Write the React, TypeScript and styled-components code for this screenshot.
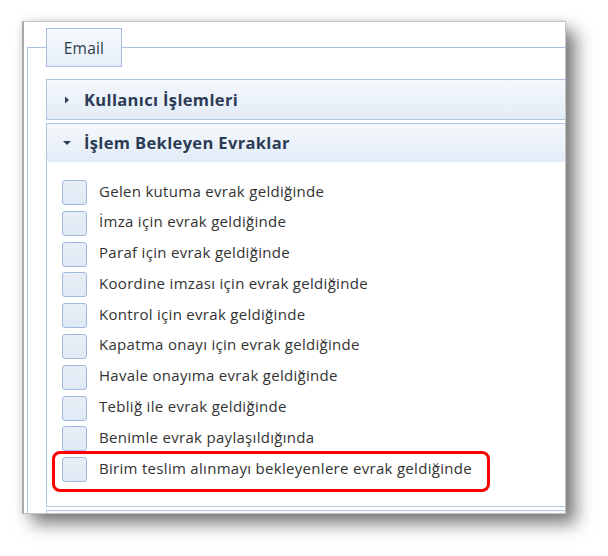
import React from 'react'
import styled, { createGlobalStyle } from 'styled-components'

const GlobalStyle = createGlobalStyle`
  html, body {
    margin: 0;
    padding: 0;
    background: #fff;
  }
  body {
    width: 608px;
    height: 556px;
    overflow: hidden;
    font-family: 'Open Sans', 'Liberation Sans', sans-serif;
  }
`

const Page = styled.div`
  padding: 21px 0 0 22px;
`

const Frame = styled.div`
  width: 541px;
  height: 491px;
  border: 1px solid #c4c4c4;
  border-left: 2px solid #a9a9a9;
  background: #fff;
  overflow: hidden;
  box-shadow: 10px 10px 16px rgba(0, 0, 0, 0.5), 0 0 8px rgba(0, 0, 0, 0.12);
`

const Fieldset = styled.fieldset`
  margin: 6px 0 0 3px;
  padding: 12px 0 0 18px;
  width: 600px;
  border: 1px solid #a9c0e4;
  border-right: none;
  border-bottom: none;
  min-inline-size: auto;
`

const Legend = styled.legend`
  box-sizing: border-box;
  height: 39px;
  width: 76px;
  padding: 0;
  border: 1px solid #a9c0e4;
  background: linear-gradient(#f6f9fd, #e6eef8);
  display: flex;
  align-items: center;
  justify-content: center;
  font-size: 15.5px;
  letter-spacing: 0.2px;
  color: #2f3b4c;
`

const Panel = styled.section`
  margin-bottom: 3px;
`

const Header = styled.div<{ open?: boolean }>`
  box-sizing: border-box;
  height: ${({ open }) => (open ? '39px' : '41px')};
  display: flex;
  align-items: center;
  gap: 12px;
  padding-left: 15px;
  border: 1px solid #b1c5e3;
  border-bottom-color: ${({ open }) => (open ? '#e3ecf7' : '#b1c5e3')};
  background: linear-gradient(#f5f8fc, #e2ecf7);
  font-weight: 700;
  font-size: 16.5px;
  letter-spacing: 0.35px;
  color: #2c3b55;
`

const Arrow = styled.svg`
  flex: none;
  width: 10px;
  height: 10px;
`

const Content = styled.div`
  box-sizing: border-box;
  height: 345px;
  padding: 18px 0 0 15px;
  border: 1px solid #b1c5e3;
  border-top: none;
  border-right: none;
  display: flex;
  flex-direction: column;
  gap: 5.8px;
`

const Row = styled.label<{ highlight?: boolean }>`
  display: flex;
  align-items: center;
  gap: 12px;
  font-size: 15px;
  letter-spacing: 0.3px;
  color: #333;
  ${({ highlight }) =>
    highlight &&
    `
    box-sizing: border-box;
    width: 438px;
    margin: -6px 0 0 -10px;
    padding: 3px 0 7px 7px;
    border: 3px solid #ff0000;
    border-radius: 8px;
  `}
`

const Text = styled.span`
  margin-bottom: 4px;
`

const Check = styled.span`
  flex: none;
  box-sizing: border-box;
  width: 25px;
  height: 25px;
  border: 1px solid #9fb9de;
  border-radius: 3px;
  background: linear-gradient(#e8eef7, #e0e9f4);
`

const ArrowRight = () => (
  <Arrow viewBox="0 0 10 10">
    <path d="M3 1.5 L7 5 L3 8.5 Z" fill="#2c3b55" />
  </Arrow>
)

const ArrowDown = () => (
  <Arrow viewBox="0 0 10 10">
    <path d="M1 3 L9 3 L5 7 Z" fill="#2c3b55" />
  </Arrow>
)

const items = [
  'Gelen kutuma evrak geldiğinde',
  'İmza için evrak geldiğinde',
  'Paraf için evrak geldiğinde',
  'Koordine imzası için evrak geldiğinde',
  'Kontrol için evrak geldiğinde',
  'Kapatma onayı için evrak geldiğinde',
  'Havale onayıma evrak geldiğinde',
  'Tebliğ ile evrak geldiğinde',
  'Benimle evrak paylaşıldığında',
  'Birim teslim alınmayı bekleyenlere evrak geldiğinde',
]

export default function App() {
  return (
    <Page>
      <GlobalStyle />
      <Frame>
        <Fieldset>
          <Legend>Email</Legend>
          <Panel>
            <Header>
              <ArrowRight />
              Kullanıcı İşlemleri
            </Header>
          </Panel>
          <Panel>
            <Header open>
              <ArrowDown />
              İşlem Bekleyen Evraklar
            </Header>
            <Content>
              {items.map((text, i) => (
                <Row key={text} highlight={i === items.length - 1}>
                  <Check />
                  <Text>{text}</Text>
                </Row>
              ))}
            </Content>
          </Panel>
          <Panel>
            <Header />
          </Panel>
        </Fieldset>
      </Frame>
    </Page>
  )
}
